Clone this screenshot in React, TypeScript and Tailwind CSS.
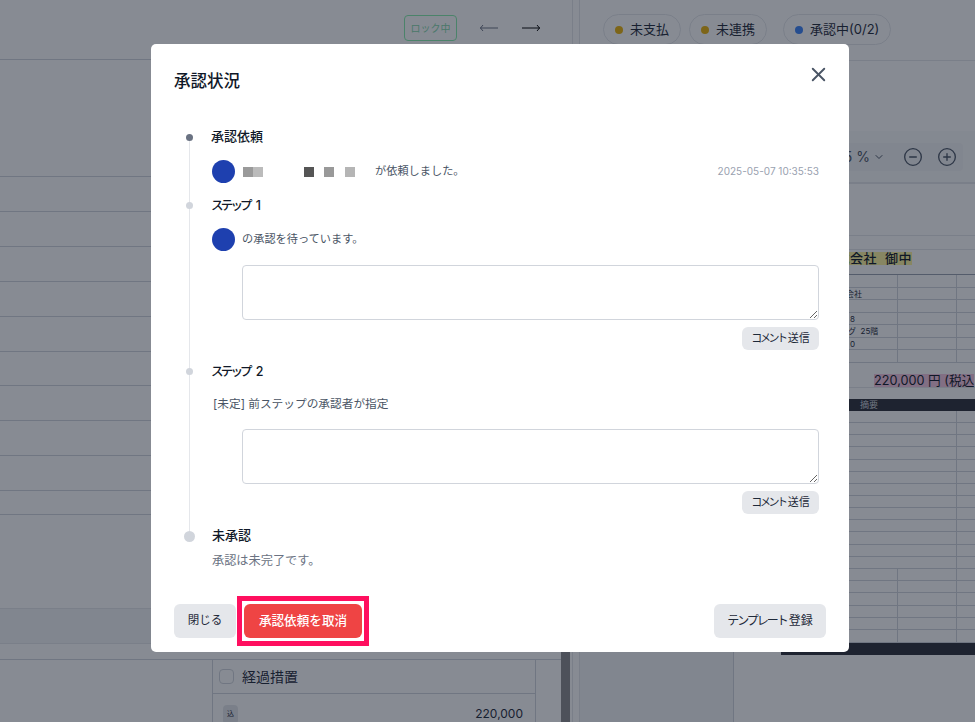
import { ChevronDown, CircleMinus, CirclePlus, X } from "lucide-react";

const listRows = ["h-[35px]", "h-[35px]", "h-[35px]", "h-[35px]", "h-[35px]", "h-[34px]", "h-[35px]", "h-[35px]", "h-[35px]", "h-[24px]"];

function Chip({ label, dot }: { label: string; dot: string }) {
  return (
    <div className="flex h-[31px] items-center gap-[7px] rounded-full border border-gray-200 px-[11px] text-[13px] text-gray-800">
      <span className={`size-[8px] rounded-full ${dot}`} />
      {label}
    </div>
  );
}

function Arrow({ dir, color }: { dir: "left" | "right"; color: string }) {
  return (
    <svg width="18" height="8" viewBox="0 0 18 8" fill="none" className={color}>
      <path d="M0 4h18" stroke="currentColor" strokeWidth="1" />
      {dir === "left" ? (
        <path d="M3 1 0.5 4 3 7" stroke="currentColor" strokeWidth="1" />
      ) : (
        <path d="M15 1l2.5 3L15 7" stroke="currentColor" strokeWidth="1" />
      )}
    </svg>
  );
}

function SheetRow({ className, children }: { className: string; children?: React.ReactNode }) {
  return (
    <div className={`grid shrink-0 grid-cols-[117px_59px_1fr] border-b border-gray-300 ${className}`}>
      <div className="overflow-hidden border-r border-gray-300 text-[8px] leading-[12px] whitespace-nowrap text-gray-800">
        {children}
      </div>
      <div className="border-r border-gray-300" />
      <div />
    </div>
  );
}

function Sheet() {
  return (
    <div className="ml-[47px] flex flex-col overflow-hidden">
      <div className="h-[14px] border-b border-gray-200" />
      <div className="flex h-[25px] items-start border-b border-gray-400 pt-[2px] pl-[42px] text-[13px] leading-[13px] font-medium tracking-[0.5px] whitespace-nowrap text-gray-900">
        <span className="bg-[#fff59d]">株式会社&nbsp;&nbsp;御中</span>
      </div>
      <SheetRow className="h-[12.5px]" />
      <SheetRow className="h-[12.5px]"><span className="pl-[49px]">株式会社</span></SheetRow>
      <SheetRow className="h-[12.5px]" />
      <SheetRow className="h-[12.5px]"><span className="pl-[69px]">8</span></SheetRow>
      <SheetRow className="h-[12.5px]"><span className="pl-[59px]">ング&nbsp;&nbsp;25階</span></SheetRow>
      <SheetRow className="h-[12.5px]"><span className="pl-[69px]">0</span></SheetRow>
      <SheetRow className="h-[13px]" />
      <div className="flex h-[25px] items-start border-b border-gray-200 pt-[11px] pl-[93px] text-[12.7px] leading-[13px] whitespace-nowrap text-gray-900">
        <span className="bg-[#f5c6e0]">220,000 円 (税込</span>
      </div>
      <div className="h-[11px]" />
      <div className="flex h-[12px] items-center bg-[#2d2f38] pl-[79px] text-[9px] text-gray-300">摘要</div>
      {Array.from({ length: 13 }, (_, i) => (
        <div key={i} className="grid h-[12.15px] grid-cols-[176px_1fr] border-b border-gray-300">
          <div className="border-r border-gray-300" />
          <div />
        </div>
      ))}
      {Array.from({ length: 6 }, (_, i) => (
        <SheetRow key={i} className="h-[12.3px]" />
      ))}
      <div className="h-[12px] bg-[#2d2f38]" />
    </div>
  );
}

function Background() {
  return (
    <div className="flex h-[722px] w-[975px] overflow-hidden bg-white">
      <div className="relative w-[561px] shrink-0">
        <div className="flex h-[60px] items-center border-b border-gray-300 pb-[3px]">
          <div className="ml-[404px] flex h-[26px] w-[53px] items-center justify-center rounded-[4px] border border-[#86efac] text-[10px] text-[#86d8ac]">
            ロック中
          </div>
          <div className="ml-[23px]"><Arrow dir="left" color="text-gray-500" /></div>
          <div className="ml-[24px]"><Arrow dir="right" color="text-black" /></div>
        </div>
        <div className="h-[117px] border-b border-gray-300" />
        {listRows.map((h, i) => (
          <div key={i} className={`${h} border-b border-gray-300`} />
        ))}
        <div className="h-[94px] border-b border-gray-200" />
        <div className="h-[35px] border-b border-gray-200 bg-gray-100" />
        <div className="h-[16px] border-b border-gray-300" />
        <div className="ml-[212px] w-[324px] border-x border-gray-300 text-gray-800">
          <div className="flex h-[34px] items-center gap-[8px] border-b border-gray-300 pl-[6px] text-[14px]">
            <span className="size-[15px] rounded-[4px] border border-gray-300" />
            経過措置
          </div>
          <div className="flex h-[40px] items-center justify-between pr-[12px] pl-[10px] text-[12px]">
            <span className="flex h-[19px] w-[15px] items-center justify-center rounded-[4px] bg-gray-200 text-[7px]">込</span>
            220,000
          </div>
        </div>
      </div>
      <div className="flex w-[9px] shrink-0 items-end">
        <div className="h-[200px] w-full bg-[#8b8a8d]" />
      </div>
      <div className="ml-[2px] w-[7px] shrink-0 border-l border-gray-200" />
      <div className="flex w-[396px] shrink-0 flex-col border-l border-gray-200">
        <div className="flex h-[61px] shrink-0 gap-[8px] border-b border-gray-200 pt-[14px] pl-[23px]">
          <Chip label="未支払" dot="bg-[#eab308]" />
          <Chip label="未連携" dot="bg-[#eab308]" />
          <div className="ml-[8px]"><Chip label="承認中(0/2)" dot="bg-[#3b82f6]" /></div>
        </div>
        <div className="flex flex-1">
          <div className="w-[154px] shrink-0 border-r border-gray-300 bg-gray-100" />
          <div className="flex min-w-0 flex-1 flex-col">
            <div className="h-[70px] shrink-0" />
            <div className="flex h-[53px] shrink-0 items-center border-b-2 border-gray-200 bg-gray-50 pr-[12px]">
              <div className="flex h-[28px] flex-1 items-center justify-end gap-[14px] rounded-[4px] bg-gray-100 pr-[6px] text-gray-600">
                <span className="flex items-center gap-[3px] text-[14px]">95 %<ChevronDown size={12} /></span>
                <span className="ml-[4px]"><CircleMinus size={20} strokeWidth={1.6} /></span>
                <CirclePlus size={20} strokeWidth={1.6} />
              </div>
            </div>
            <div className="h-[52px] shrink-0 border-b border-gray-200" />
            <Sheet />
          </div>
        </div>
      </div>
    </div>
  );
}

function StepLabel({ kana, num }: { kana: string; num: string }) {
  return (
    <div className="flex h-[24px] items-center pl-[12px]">
      <span className="relative size-[7px] rounded-full bg-gray-300" />
      <span className="mt-[2px] ml-[18px] text-[12.5px] font-medium text-gray-900">
        <span className="tracking-[-2.8px]">{kana}</span>
        <span className="ml-[6px]">{num}</span>
      </span>
    </div>
  );
}

function Comment() {
  return (
    <div className="mr-[7px] ml-[68px]">
      <textarea className="block h-[55px] w-full rounded-[4px] border border-gray-300 bg-white" />
      <div className="mt-[7px] flex justify-end">
        <button className="h-[23px] w-[77px] rounded-md bg-gray-200 text-[11px] text-gray-800">
          <span className="tracking-[-2.4px]">コメント</span>
          <span className="ml-[2px]">送信</span>
        </button>
      </div>
    </div>
  );
}

function Modal() {
  return (
    <div className="absolute top-[44px] left-[151px] h-[608px] w-[698px] rounded-[5px] bg-white px-[23px] text-gray-600">
      <div className="flex h-[81px] items-start justify-between pt-[24px]">
        <h2 className="text-[16.5px] leading-[26px] font-medium text-gray-900">承認状況</h2>
        <X size={23} strokeWidth={2} className="mt-[-5.5px] mr-[-3.5px] text-gray-600" />
      </div>

      <div className="relative">
        <div className="absolute top-[12px] bottom-[37px] left-[15px] w-px bg-gray-200" />

        <div className="flex h-[24px] items-center pl-[12px]">
          <span className="relative size-[7px] rounded-full bg-gray-500" />
          <span className="ml-[18px] text-[13px] font-medium text-gray-900">承認依頼</span>
        </div>
        <div className="mt-[11px] mr-[7px] ml-[38px] flex h-[23px] items-center text-[11px]">
          <span className="size-[23px] rounded-full bg-[#1e40af]" />
          <span className="ml-[8px] size-[10px] bg-[#9a9a9a]" />
          <span className="size-[10px] bg-[#bbbbbb]" />
          <span className="ml-[41px] size-[10px] bg-[#555555]" />
          <span className="ml-[10px] size-[10px] bg-[#999999]" />
          <span className="ml-[11px] size-[10px] bg-[#b5b5b5]" />
          <span className="ml-[20px] text-[11.2px]">が依頼しました。</span>
          <span className="ml-auto text-[10px] text-gray-400">2025-05-07 10:35:53</span>
        </div>

        <div className="mt-[10px]"><StepLabel kana="ステップ" num="1" /></div>
        <div className="mt-[11px] ml-[38px] flex h-[23px] items-center text-[11.2px]">
          <span className="size-[23px] rounded-full bg-[#1e40af]" />
          <span className="ml-[7px]">の承認を待っています。</span>
        </div>
        <div className="mt-[14px]"><Comment /></div>

        <div className="mt-[9px]"><StepLabel kana="ステップ" num="2" /></div>
        <div className="mt-[9px] ml-[39px] flex h-[24px] items-center pt-[1px] text-[11.7px]">[未定] 前ステップの承認者が指定</div>
        <div className="mt-[13px]"><Comment /></div>

        <div className="mt-[10px] flex h-[24px] items-center pl-[10px]">
          <span className="relative size-[11px] rounded-full bg-gray-300" />
          <span className="ml-[17px] text-[13px] font-medium text-gray-900">未承認</span>
        </div>
        <div className="mt-[1px] ml-[38px] flex h-[24px] items-center text-[12.2px] text-gray-500">承認は未完了です。</div>
      </div>

      <div className="mt-[31px] flex h-[34px] items-stretch text-[12px]">
        <button className="w-[62px] rounded-md bg-gray-200 text-[11.5px] text-gray-800">閉じる</button>
        <button className="relative ml-[8px] w-[118px] rounded-md bg-[#ef4444] text-[12.6px] font-medium text-white">
          承認依頼を取消
          <span className="absolute -top-[8px] -right-[7px] -bottom-[8px] -left-[7px] border-[5px] border-[#ff0f5f]" />
        </button>
        <button className="ml-auto w-[112px] rounded-md bg-gray-200 text-gray-800">
          <span className="tracking-[-2px]">テンプレート</span>
          <span className="ml-[2px]">登録</span>
        </button>
      </div>
    </div>
  );
}

export default function App() {
  return (
    <div className="relative h-[722px] w-[975px] overflow-hidden font-['Inter','Noto_Sans_CJK_JP',sans-serif]">
      <Background />
      <div className="absolute inset-0 bg-gray-900/50" />
      <Modal />
    </div>
  );
}
